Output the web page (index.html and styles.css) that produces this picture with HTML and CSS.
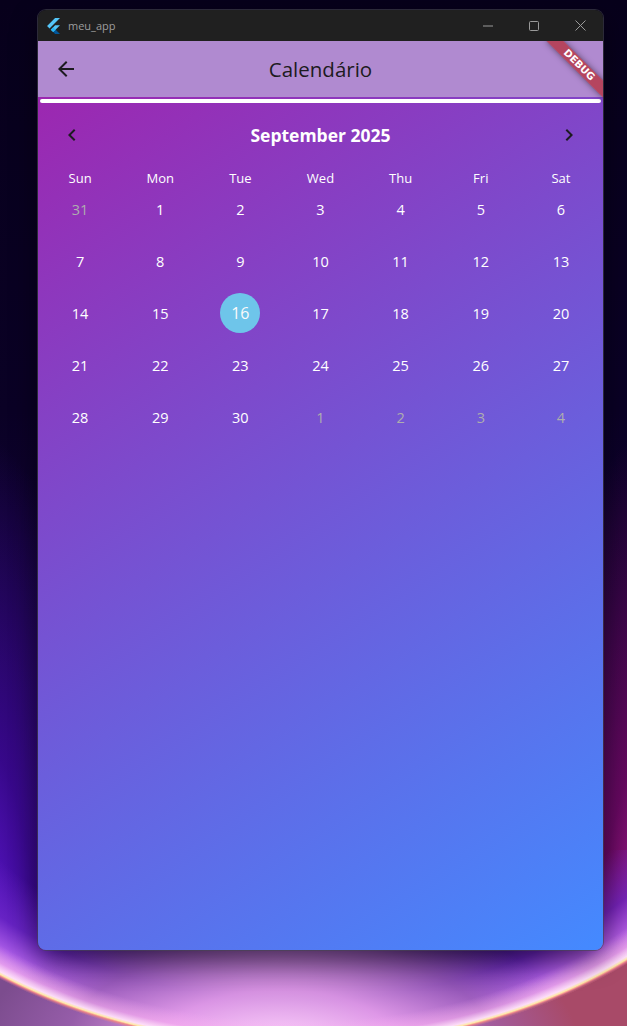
FILE: index.html
```html
<!DOCTYPE html>
<html lang="pt">
<head>
<meta charset="utf-8">
<title>meu_app</title>
<link rel="stylesheet" href="styles.css">
</head>
<body>
<div class="desktop">
  <div class="window">
    <div class="titlebar">
      <svg class="logo" viewBox="9 10 147 181" aria-hidden="true">
        <path fill="#54c5f8" d="M37.7 128.9 L9.8 101 L100.4 10.4 H155.9 Z"/>
        <path fill="#54c5f8" d="M155.9 93.1 H100.4 L51.8 141.6 L79.6 169.4 Z"/>
        <path fill="#01579b" d="M79.6 169.4 L100.4 190.2 H155.9 L107.4 141.6 Z"/>
        <path fill="#29b6f6" d="M51.8 141.6 L79.6 113.8 L107.4 141.6 L79.6 169.4 Z"/>
      </svg>
      <span class="app-name">meu_app</span>
      <div class="controls">
        <div class="ctrl"><svg width="10" height="10" viewBox="0 0 10 10"><line x1="0" y1="5" x2="10" y2="5" stroke="#9a9a9a" stroke-width="1"/></svg></div>
        <div class="ctrl"><svg width="10" height="10" viewBox="0 0 10 10"><rect x="0.5" y="0.5" width="9" height="9" rx="1" fill="none" stroke="#9a9a9a" stroke-width="1"/></svg></div>
        <div class="ctrl"><svg width="11" height="11" viewBox="0 0 11 11"><path d="M0.5 0.5 L10.5 10.5 M10.5 0.5 L0.5 10.5" stroke="#9a9a9a" stroke-width="1"/></svg></div>
      </div>
    </div>
    <div class="app">
      <header class="appbar">
        <div class="leading">
          <svg class="icon" viewBox="0 0 24 24"><path d="M20 11H7.83l5.59-5.59L12 4l-8 8 8 8 1.41-1.41L7.83 13H20v-2z"/></svg>
        </div>
        <h1 class="title">Calendário</h1>
        <div></div>
      </header>
      <main class="body">
        <div class="line"></div>
        <div class="cal-header">
          <div class="chev"><svg class="icon" viewBox="0 0 24 24"><path d="M15.41 7.41L14 6l-6 6 6 6 1.41-1.41L10.83 12z"/></svg></div>
          <div class="month">September 2025</div>
          <div class="chev"><svg class="icon" viewBox="0 0 24 24"><path d="M10 6L8.59 7.41 13.17 12l-4.58 4.59L10 18l6-6z"/></svg></div>
        </div>
        <div class="dow">
          <span>Sun</span><span>Mon</span><span>Tue</span><span>Wed</span><span>Thu</span><span>Fri</span><span>Sat</span>
        </div>
        <div class="week">
          <div class="day out">31</div><div class="day">1</div><div class="day">2</div><div class="day">3</div><div class="day">4</div><div class="day">5</div><div class="day">6</div>
        </div>
        <div class="week">
          <div class="day">7</div><div class="day">8</div><div class="day">9</div><div class="day">10</div><div class="day">11</div><div class="day">12</div><div class="day">13</div>
        </div>
        <div class="week">
          <div class="day">14</div><div class="day">15</div><div class="day today"><span>16</span></div><div class="day">17</div><div class="day">18</div><div class="day">19</div><div class="day">20</div>
        </div>
        <div class="week">
          <div class="day">21</div><div class="day">22</div><div class="day">23</div><div class="day">24</div><div class="day">25</div><div class="day">26</div><div class="day">27</div>
        </div>
        <div class="week">
          <div class="day">28</div><div class="day">29</div><div class="day">30</div><div class="day out">1</div><div class="day out">2</div><div class="day out">3</div><div class="day out">4</div>
        </div>
      </main>
      <div class="debug">DEBUG</div>
    </div>
  </div>
</div>
</body>
</html>
```
FILE: styles.css
```css
html, body {
  margin: 0;
  padding: 0;
}

body {
  background: #08001d;
}

.desktop {
  width: 627px;
  height: 1026px;
  box-sizing: border-box;
  padding: 10px 0 0 38px;
  overflow: hidden;
  font-family: "Open Sans", "Noto Sans", "DejaVu Sans", sans-serif;
  background-color: #08001d;
  background-image:
    radial-gradient(ellipse 500px 350px at 300px -154px, rgba(0,0,0,0) 93%, rgba(245,170,240,0.55) 97%, rgba(255,225,250,0.95) 99%, #ffeaa8 99.6%, #f08a8a 100%, rgba(0,0,0,0) 100.7%),
    radial-gradient(ellipse 300px 150px at 280px 200px, rgba(255,218,252,0.97) 0%, rgba(235,165,235,0.85) 40%, rgba(160,100,180,0.7) 72%, rgba(120,70,150,0) 100%),
    radial-gradient(ellipse 500px 350px at 300px -154px, rgba(0,0,0,0) 76%, rgba(110,40,200,0.75) 87%, rgba(180,100,235,0.9) 94%, rgba(235,175,240,0.95) 99.3%, rgba(0,0,0,0) 100%),
    radial-gradient(ellipse 500px 350px at 300px -154px, rgba(0,0,0,0) 100%, #7c4c8e 100.6%),
    radial-gradient(ellipse 500px 350px at -13px -154px, rgba(0,0,0,0) 100%, #a84a68 100.6%),
    radial-gradient(ellipse 150px 550px at -30px 980px, rgba(110,30,240,0.95) 0%, rgba(75,10,185,0.6) 45%, rgba(40,0,120,0) 100%),
    radial-gradient(ellipse 160px 560px at 670px 980px, rgba(225,45,175,0.95) 0%, rgba(150,10,110,0.6) 45%, rgba(100,0,80,0) 100%),
    linear-gradient(180deg, #07001b 0%, #0a0125 40%, #16043e 70%, #2a0860 100%);
  background-position:
    0 850px,
    0 850px,
    0 850px,
    0 850px,
    313px 850px,
    0 0,
    0 0,
    0 0;
  background-size:
    627px 176px,
    627px 176px,
    627px 176px,
    314px 176px,
    314px 176px,
    100% 100%,
    100% 100%,
    100% 100%;
  background-repeat: no-repeat;
}

.window {
  width: 565px;
  height: 940px;
  border-radius: 8px;
  overflow: hidden;
  display: flex;
  flex-direction: column;
  box-shadow: 0 0 0 1px rgba(70, 70, 80, 0.6), 0 10px 28px rgba(0, 0, 0, 0.45);
}

.titlebar {
  height: 31px;
  flex: none;
  background: #202020;
  display: flex;
  align-items: center;
  padding-left: 9px;
}

.logo {
  width: 13px;
  height: 16px;
  margin-right: 8px;
}

.app-name {
  font-size: 11px;
  color: #9d9d9d;
}

.controls {
  margin-left: auto;
  display: flex;
  height: 100%;
}

.ctrl {
  width: 46px;
  display: flex;
  align-items: center;
  justify-content: center;
}

.app {
  position: relative;
  flex: 1;
  display: flex;
  flex-direction: column;
  overflow: hidden;
}

.appbar {
  height: 56px;
  flex: none;
  background: #b08ad0;
  display: grid;
  grid-template-columns: 56px 1fr 56px;
  align-items: center;
}

.leading {
  display: flex;
  padding-left: 16px;
}

.icon {
  width: 24px;
  height: 24px;
  fill: #1d1b20;
}

.title {
  margin: 0;
  text-align: center;
  font-size: 20.5px;
  font-weight: 400;
  color: #1d1b20;
}

.body {
  flex: 1;
  background: linear-gradient(146.5deg, #9c27b0 0%, #448aff 100%);
  padding: 2px 2px 0;
}

.line {
  height: 4px;
  background: #ffffff;
  border-radius: 2px;
}

.cal-header {
  height: 64px;
  display: flex;
  align-items: center;
}

.chev {
  margin: 0 8px;
  padding: 12px;
  display: flex;
}

.month {
  flex: 1;
  text-align: center;
  color: #ffffff;
  font-weight: 700;
  font-size: 17.5px;
}

.dow {
  display: grid;
  grid-template-columns: repeat(7, 1fr);
  grid-template-rows: 16px;
  height: 16px;
  color: #ffffff;
  font-size: 13px;
}

.dow span {
  text-align: center;
  line-height: 16px;
  padding-top: 3px;
}

.week {
  display: grid;
  grid-template-columns: repeat(7, 1fr);
  height: 52px;
}

.day {
  display: flex;
  align-items: center;
  justify-content: center;
  color: #ffffff;
  font-size: 14.5px;
}

.day.out {
  color: #aeaeae;
}

.day.today span {
  width: 40px;
  height: 40px;
  border-radius: 50%;
  background: #6ec5ea;
  display: flex;
  align-items: center;
  justify-content: center;
  font-size: 16px;
  color: #fafafa;
}

.debug {
  position: absolute;
  left: 501px;
  top: 18px;
  width: 80px;
  height: 12px;
  transform: rotate(45deg);
  background: rgba(183, 28, 28, 0.63);
  box-shadow: 0 0 6px rgba(0, 0, 0, 0.5);
  color: #ffffff;
  font-family: "DejaVu Sans", sans-serif;
  font-weight: 900;
  font-size: 10px;
  line-height: 12px;
  text-align: center;
}
```
